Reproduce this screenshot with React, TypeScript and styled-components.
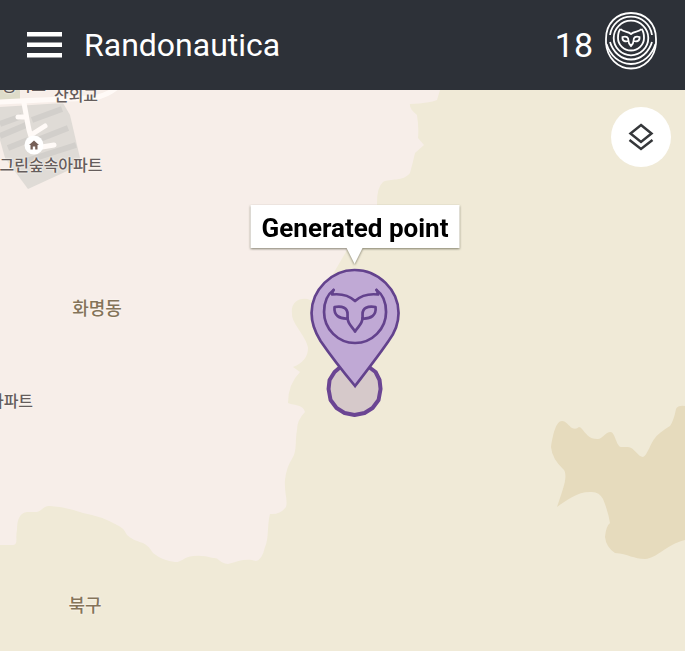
import React from "react";
import styled, { createGlobalStyle } from "styled-components";

const GlobalStyle = createGlobalStyle`
  *, *::before, *::after {
    box-sizing: border-box;
  }
  body {
    margin: 0;
    font-family: Roboto, "Noto Sans CJK KR", sans-serif;
  }
`;

const Screen = styled.div`
  display: flex;
  flex-direction: column;
  min-height: 100vh;
`;

const Header = styled.header`
  display: flex;
  align-items: center;
  height: 90px;
  padding: 0 28px 0 24px;
  background: #2d3138;
  color: #fff;
`;

const MenuButton = styled.button`
  display: flex;
  padding: 0;
  border: 0;
  background: none;
  color: inherit;
  cursor: pointer;
`;

const Title = styled.h1`
  flex: 1;
  margin: 0 0 0 20px;
  font-size: 32px;
  line-height: 40px;
  font-weight: 400;
`;

const Balance = styled.div`
  display: flex;
  align-items: center;
  gap: 12px;
  font-size: 34px;
  line-height: 40px;
`;

const MapArea = styled.main`
  position: relative;
  flex: 1;
  overflow: hidden;
  background: #f0ead7;
`;

const Terrain = styled.svg`
  position: absolute;
  inset: 0;
  width: 100%;
  height: 100%;
`;

const PlaceLabel = styled.span<{
  $x: number;
  $y: number;
  $size?: number;
  $color?: string;
}>`
  position: absolute;
  left: ${({ $x }) => $x}px;
  top: ${({ $y }) => $y}px;
  transform: translate(-50%, -50%);
  font-family: "Noto Sans CJK KR", sans-serif;
  font-size: ${({ $size = 16 }) => $size}px;
  line-height: 24px;
  font-weight: 500;
  white-space: nowrap;
  color: ${({ $color = "#655d5c" }) => $color};
  text-shadow: 0 0 2px #fff8f2, 0 0 2px #fff8f2;
`;

const LayersButton = styled.button`
  position: absolute;
  top: 17px;
  right: 14px;
  display: flex;
  align-items: center;
  justify-content: center;
  width: 60px;
  height: 60px;
  padding: 0;
  border: 0;
  border-radius: 50%;
  background: #fff;
  cursor: pointer;
`;

const Marker = styled.div<{ $x: number; $y: number }>`
  position: absolute;
  left: ${({ $x }) => $x}px;
  top: ${({ $y }) => $y}px;
  transform: translateX(-50%);
  display: flex;
  flex-direction: column;
  align-items: center;
`;

const Callout = styled.div`
  position: relative;
  padding: 8px 11px 5px;
  background: #fff;
  color: #000;
  font-size: 26px;
  line-height: 30px;
  font-weight: 700;
  white-space: nowrap;
  filter: drop-shadow(0 1px 1px rgba(70, 70, 50, 0.65));

  &::after {
    content: "";
    position: absolute;
    left: 50%;
    top: 100%;
    margin-left: -8px;
    border: 8px solid transparent;
    border-top: 16px solid #fff;
    border-bottom: 0;
  }
`;

const PinDrawing = styled.svg`
  display: block;
  margin-top: 20px;
`;

const places = [
  { name: "공아트", x: 24, y: -6 },
  { name: "산외교", x: 76, y: 4 },
  { name: "그린숲속아파트", x: 51, y: 74 },
  { name: "화명동", x: 97, y: 217, size: 18, color: "#84745a" },
  { name: "아파트", x: 11, y: 310 },
  { name: "북구", x: 85, y: 514, size: 18, color: "#84745a" },
];

const MenuIcon = () => (
  <svg width="40" height="36" viewBox="0 0 40 36" fill="currentColor" aria-hidden="true">
    <path d="M3 5h35v4.500H3zM3 15.500h35v4.500H3zM3 26h35v4.500H3z" />
  </svg>
);

const OwlCoin = () => (
  <svg width="52" height="66" viewBox="0 0 52 66" fill="none" stroke="#fff" strokeWidth="1.800" aria-hidden="true">
    <circle cx="26" cy="26" r="17.300" />
    <path d="M5 23A21.200 21.200 0 0 1 47 23" />
    <path d="M1 27C1 11 12 1 26 1s25 10 25 26v4C50 46 39 56.500 26 56.500S2 46 1 31z" />
    <path d="M1.500 32C5 43 14 52 26 52s21-9 24.500-20M5 30c3 10 11 17.500 21 17.500S44 40 47 30" />
    <path d="M15.500 17C13.500 19 13 23 13 26c0 7 6 12.500 13 12.500S39 33 39 26c0-3-.500-7-2.500-9M15.500 17c3 3.500 7 1.500 10.500 5 3.500-3.500 7.500-1.500 10.500-5" strokeLinejoin="round" />
    <path d="M17.500 25c4-1 6 0 6 4-3.500 1-6.500 0-6-4zM34.500 25c-4-1-6 0-6 4 3.500 1 6.500 0 6-4zM23.500 29c0 2 1 3.500 2.500 5 1.500-1.500 2.500-3 2.500-5" />
  </svg>
);

const LayersIcon = () => (
  <svg width="28" height="30" viewBox="0 0 28 30" fill="none" stroke="#35373a" strokeWidth="2.500" aria-hidden="true">
    <path d="M14 3l10.500 8.500L14 20 3.500 11.500z" />
    <path d="M2.500 18L14 27l11.500-9" />
  </svg>
);

const OwlPin = () => (
  <PinDrawing width="92" height="152" viewBox="0 0 92 152" fill="none" aria-hidden="true">
    <path
      d="M41 96L51 96 59 98 67 104 71 112 72 121 70 132 64 140 56 145 46 147 36 145 28 140 22 132 20 121 21 112 26 104 33 98z"
      fill="#d6c9ca"
      stroke="#6b4593"
      strokeWidth="4"
      strokeLinejoin="round"
    />
    <path
      d="M46 2C23 2 3 22 3 45c0 10 4 20 9 28 11 16 22 30 34.500 45C58 103 69 89 80 73c6-8 10-18 10-28C90 22 70 2 46 2z"
      fill="#c0a9d5"
      stroke="#63428d"
      strokeWidth="2.700"
    />
    <g stroke="#63428d" strokeWidth="2.700" strokeLinecap="round" strokeLinejoin="round">
      <path d="M25 22C18 27 15.500 36 15.500 44c0 17 14 31 31 31s31-14 31-31c0-8-2.500-17-9.500-22" />
      <path d="M25 22c-1 2-1.500 3-1.500 4.500 9-1 17 1 23 6.500 6-5.500 14-7.500 23-6.500 0-1.500-.500-2.500-1.500-4.500" />
      <path d="M26 39c8-1.500 13 1 13 7v4.500c-8 .500-14-3-13-11.500zM67 39c-8-1.500-13 1-13 7v4.500c8 .500 14-3 13-11.500z" />
      <path d="M39 50c0 6 5 9 7.500 13.500C49 59 54 56 54 50" />
    </g>
  </PinDrawing>
);

const MapTerrain = () => (
  <Terrain viewBox="0 90 685 561" preserveAspectRatio="xMinYMin slice" aria-hidden="true">
    <path
      fill="#f7eee9"
      d="M0 90H440L437 100Q430 103 410 104Q409 109 417 115Q419 128 418 138L424 145 415 153Q413 162 410 173C403 182 391 178 383 182Q377 187 377 203V235L347 250 318 300H310Q306 298 302 299C294 300 291 307 292 313C291 323 307 337 308 348Q308 361 293 367L300 372Q288 384 288 403C295 406 303 404 305 412Q297 420 297 430C295 440 297 450 293 457Q286 468 285 480C284 492 288 500 286 507Q280 515 270 514C267 525 269 539 265 547Q262 560 256 561C246 558 239 561 228 564C219 563 219 557 213 558Q203 555 193 556C184 557 180 563 175 562Q163 561 153 553Q148 545 143 543C136 541 130 538 127 535Q123 527 117 525Q101 516 83 513Q66 507 50 506C43 506 42 511 37 512H27Q17 513 17 530C15 538 19 545 12 545H0Z"
    />
    <path
      fill="#e6dbbd"
      d="M685 406Q678 405 676 409Q674 420 670 426C662 431 657 435 655 438C651 442 647 456 643 457C638 457 634 447 628 447H621C616 446 615 431 610 432C604 433 602 440 597 439C586 439 583 427 579 427Q576 430 572 428C569 426 566 421 562 421C556 421 553 434 551 447Q552 459 564 470C568 477 563 489 557 507C567 500 577 492 590 492Q599 491 603 499Q608 511 610 523Q606 526 605 537Q606 547 615 553C628 554 634 559 645 559C658 558 665 545 685 540Z"
    />
    <path fill="#dfdbd6" d="M0 107L63 103 70 115 80 158 78 166 28 189 5 158 0 140z" />
    <path stroke="#d2cfcb" strokeWidth="6" d="M0 124L22 116M0 136L26 125M32 120L62 109M8 148L28 140M40 139L68 128M20 163L76 145" />
    <path fill="#dedcc9" d="M0 90h20v9L0 103z" />
    <g fill="none" stroke="#fffaf7" strokeWidth="5" strokeLinecap="round" strokeLinejoin="round">
      <path d="M0 102Q60 99 94 98 108 95 116 88" />
      <path d="M24 103L28 125Q30 136 34 143M18 117H25M34 133L45 126M42 147L54 145" />
    </g>
    <circle cx="34" cy="145" r="9.500" fill="#fff" />
    <path fill="#755f57" d="M29 145L34 140.500 39 145H37.500V149.500H35.200V146.500H32.800V149.500H30.500V145z" />
  </Terrain>
);

const App = () => (
  <>
    <GlobalStyle />
    <Screen>
      <Header>
        <MenuButton type="button" aria-label="Menu">
          <MenuIcon />
        </MenuButton>
        <Title>Randonautica</Title>
        <Balance>
          <span>18</span>
          <OwlCoin />
        </Balance>
      </Header>
      <MapArea>
        <MapTerrain />
        {places.map(({ name, x, y, size, color }) => (
          <PlaceLabel key={name} $x={x} $y={y} $size={size} $color={color}>
            {name}
          </PlaceLabel>
        ))}
        <Marker $x={355} $y={115}>
          <Callout>Generated point</Callout>
          <OwlPin />
        </Marker>
        <LayersButton type="button" aria-label="Map layers">
          <LayersIcon />
        </LayersButton>
      </MapArea>
    </Screen>
  </>
);

export default App;
